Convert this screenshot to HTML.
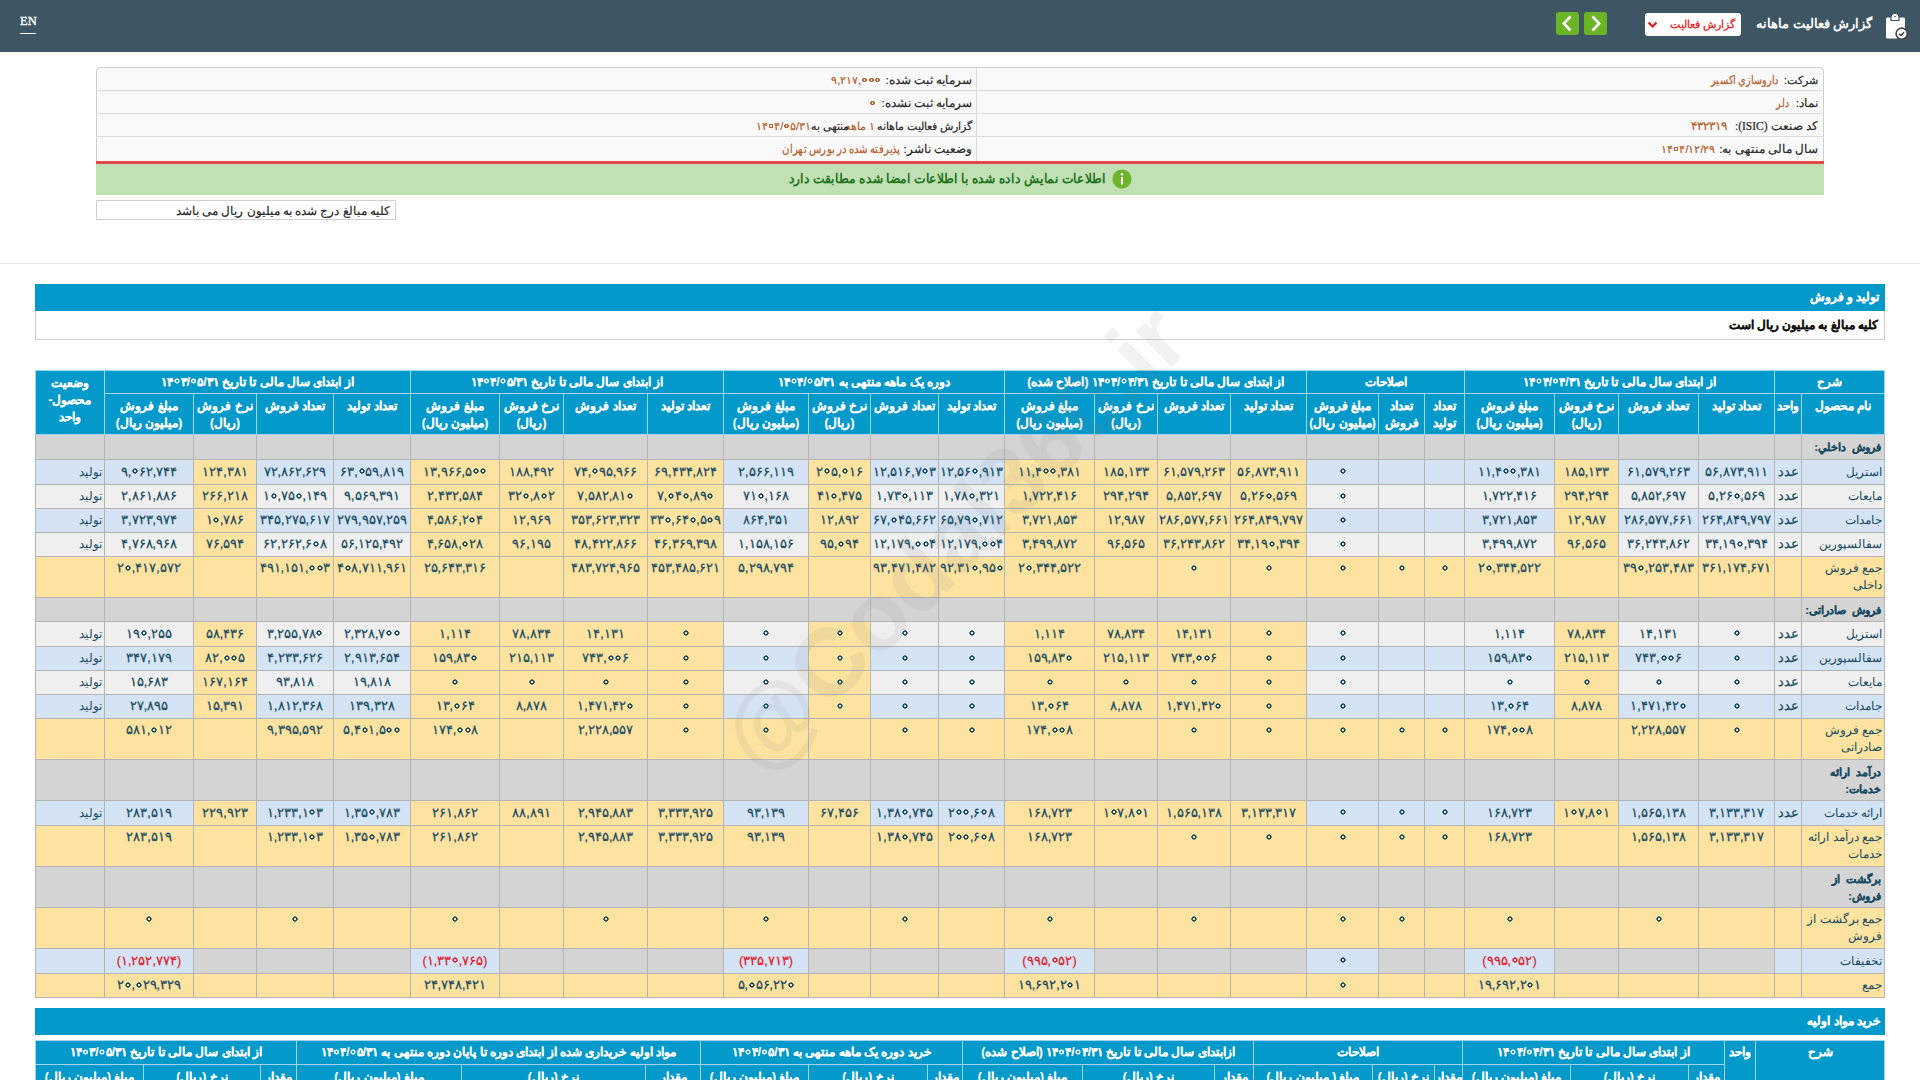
<!DOCTYPE html><html lang="fa" dir="rtl"><head><meta charset="utf-8"><title>Codal</title><style>
*{box-sizing:border-box;margin:0;padding:0}
html,body{width:1920px;height:1080px;overflow:hidden;background:#fff}
body{position:relative;font-family:'Liberation Sans',sans-serif;direction:rtl}
.a{position:absolute;white-space:nowrap}
#t1,#t2{position:absolute;left:0;top:0;width:1920px;height:1080px}
#t1grid{position:absolute;left:35px;top:370px;width:1850px;height:628px;background:#b4b4b4}
#t1hgrid{position:absolute;left:35px;top:370px;width:1850px;height:65px;background:#9fd4ec}
#t2grid{position:absolute;left:35px;top:1040px;width:1850px;height:60px;background:#9fd4ec}
.c,.l,.h,.sl{position:absolute;overflow:hidden;color:#184b62;font-size:12px;line-height:17px;text-align:center;white-space:nowrap;display:flex;align-items:center;justify-content:center}
.l{justify-content:flex-start;padding-right:2px;text-align:right}
.ct{align-items:flex-start;padding-top:3px}
.h{color:#fff;font-weight:bold;font-size:12px;-webkit-text-stroke:0.15px #fff}
.ht{align-items:flex-start;padding-top:4px}
.sl{justify-content:flex-start;padding-right:3px;font-weight:bold;align-items:flex-start;padding-top:3px;text-align:right;font-size:11.25px;padding-top:4px;word-spacing:3px;-webkit-text-stroke:0.2px currentColor}
.red{color:#e0202a}
bdo{unicode-bidi:isolate-override}
.hr{align-items:flex-start;padding-top:3px}
i{display:inline-block;width:0.48em;height:0.48em;background:radial-gradient(circle,transparent 0.07em,currentColor 0.105em,currentColor 0.19em,transparent 0.23em);margin:0 0.06em;vertical-align:0.12em}
.c{-webkit-text-stroke:0.25px currentColor;font-size:12.5px}
.it{color:#2a2a2a;-webkit-text-stroke:0.2px currentColor}
.iv{color:#b5602b;-webkit-text-stroke:0.2px currentColor}
</style></head><body>
<div class="a" style="left:0;top:0;width:1920px;height:52px;background:#3e5563"></div>
<div id="men" class="a" style="left:20px;top:13px;font-family:'Liberation Serif',serif;font-size:12.5px;color:#fff;direction:ltr;line-height:17px;-webkit-text-stroke:0.3px #fff">EN</div>
<div class="a" style="left:20px;top:33px;width:16px;height:1px;background:#fff"></div>
<svg class="a" style="left:1880px;top:10px" width="34" height="34" viewBox="0 0 34 34">
<rect x="6" y="7.5" width="19" height="21" rx="1.5" fill="#fff"/>
<path d="M11 10.5 v-3 a4 4 0 0 1 8 0 v3 z" fill="#fff" stroke="#3e5563" stroke-width="1.2"/>
<circle cx="15" cy="6.5" r="0.8" fill="#3e5563"/>
<circle cx="21.7" cy="23.7" r="5.6" fill="#fff" stroke="#444" stroke-width="1.6"/>
<path d="M19.2 23.9 l1.7 1.6 l3.2 -3.2" fill="none" stroke="#444" stroke-width="1.6"/>
</svg>
<div id="mtitle" class="a " style="right:47.5px;top:14px;font-size:13.25px;line-height:20px;font-weight:bold;color:#fff">گزارش فعالیت ماهانه</div>
<div class="a" style="left:1645px;top:13px;width:96px;height:23px;background:#fff;border-radius:3px"></div>
<div id="mdrop" class="a " style="right:185px;top:15px;font-size:11.25px;line-height:18px;color:#e01c1c;-webkit-text-stroke:0.25px currentColor">گزارش فعالیت</div>
<svg class="a" style="left:1647px;top:20px" width="11" height="9" viewBox="0 0 11 9"><path d="M1.5 2.5 L5.5 6.5 L9.5 2.5" fill="none" stroke="#e01c1c" stroke-width="2.2"/></svg>
<div class="a" style="left:1556px;top:12px;width:23px;height:23px;background:#6bb424;border-radius:3px"></div>
<div class="a" style="left:1584px;top:12px;width:23px;height:23px;background:#6bb424;border-radius:3px"></div>
<svg class="a" style="left:1556px;top:12px" width="23" height="23" viewBox="0 0 23 23"><path d="M14.5 4.5 L7.8 11.5 L14.5 18.5" fill="none" stroke="#fff" stroke-width="2.6"/></svg>
<svg class="a" style="left:1584px;top:12px" width="23" height="23" viewBox="0 0 23 23"><path d="M8.5 4.5 L15.2 11.5 L8.5 18.5" fill="none" stroke="#fff" stroke-width="2.6"/></svg>
<div class="a" style="left:96px;top:67px;width:1728px;height:96px;background:#f9f9f9;border:1px solid #cfcfcf;border-radius:4px 4px 0 0"></div>
<div class="a" style="left:97px;top:90px;width:1726px;height:1px;background:#dcdcdc"></div>
<div class="a" style="left:97px;top:113px;width:1726px;height:1px;background:#dcdcdc"></div>
<div class="a" style="left:97px;top:136px;width:1726px;height:1px;background:#dcdcdc"></div>
<div class="a" style="left:976px;top:68px;width:1px;height:93px;background:#dcdcdc"></div>
<div id="mr0l" class="a it" style="right:102px;top:68px;font-size:10.5px;line-height:24px;">شرکت:</div>
<div id="mr0v" class="a iv" style="right:142px;top:68px;font-size:11.5px;line-height:24px;transform:scaleX(0.811);transform-origin:100% 50%">داروسازي اکسیر</div>
<div id="mr1l" class="a it" style="right:102px;top:91px;font-size:11.5px;line-height:24px;">نماد:</div>
<div id="mr1v" class="a iv" style="right:131px;top:91px;font-size:11.5px;line-height:24px;transform:scaleX(0.794);transform-origin:100% 50%">دلر</div>
<div id="mr2l" class="a it" style="right:102px;top:114px;font-size:11.5px;line-height:24px;">کد صنعت <span style="font-family:'Liberation Serif',serif">(ISIC)</span>:</div>
<div id="mr2v" class="a iv" style="right:193.5px;top:114px;font-size:12px;line-height:24px;">۴۳۲۳۱۹</div>
<div id="mr3l" class="a it" style="right:102px;top:137px;font-size:11.5px;line-height:24px;">سال مالی منتهی به:</div>
<div id="mr3v" class="a iv" style="right:204.5px;top:137px;font-size:11px;line-height:24px;"><bdo dir="ltr">۱۴<i></i>۴/۱۲/۲۹</bdo></div>
<div id="ml0l" class="a it" style="right:948px;top:68px;font-size:11.5px;line-height:24px;">سرمایه ثبت شده:</div>
<div id="ml0v" class="a iv" style="right:1039px;top:68px;font-size:11px;line-height:24px;"><bdo dir="ltr">۹,۲۱۷,<i></i><i></i><i></i></bdo></div>
<div id="ml1l" class="a it" style="right:948px;top:91px;font-size:11.5px;line-height:24px;">سرمایه ثبت نشده:</div>
<div id="ml1v" class="a iv" style="right:1044px;top:91px;font-size:11px;line-height:24px;"><bdo dir="ltr"><i></i></bdo></div>
<div id="ml2l" class="a it" style="right:948px;top:114px;font-size:11px;line-height:24px;">گزارش فعالیت ماهانه</div>
<div id="ml2v" class="a iv" style="right:1045px;top:114px;font-size:11px;line-height:24px;">۱ ماهه</div>
<div id="ml2m" class="a it" style="right:1070.6px;top:114px;font-size:11px;line-height:24px;">منتهی به</div>
<div id="ml2w" class="a iv" style="right:1109px;top:114px;font-size:11px;line-height:24px;"><bdo dir="ltr">۱۴<i></i>۴/<i></i>۵/۳۱</bdo></div>
<div id="ml3l" class="a it" style="right:948px;top:137px;font-size:11.5px;line-height:24px;">وضعیت ناشر:</div>
<div id="ml3v" class="a iv" style="right:1020px;top:137px;font-size:11.5px;line-height:24px;transform:scaleX(0.846);transform-origin:100% 50%">پذیرفته شده در بورس تهران</div>
<div class="a" style="left:96px;top:161px;width:1728px;height:3px;background:#e04a4a"></div>
<div class="a" style="left:96px;top:164px;width:1728px;height:31px;background:#c1e0b4"></div>
<div id="mgreen" class="a " style="right:814px;top:169px;font-size:13px;line-height:20px;font-weight:bold;color:#22741f;transform:scaleX(0.942);transform-origin:100% 50%">اطلاعات نمایش داده شده با اطلاعات امضا شده مطابقت دارد</div>
<svg class="a" style="left:1112px;top:169px" width="20" height="20" viewBox="0 0 20 20"><circle cx="10" cy="10" r="9.6" fill="#6fb52a"/><rect x="9" y="8" width="2" height="7.5" fill="#fff"/><circle cx="10" cy="5.3" r="1.2" fill="#fff"/></svg>
<div class="a" style="left:96px;top:200px;width:300px;height:20px;border:1px solid #cfcfcf;background:#fff"></div>
<div id="mnote" class="a it" style="right:1530px;top:202px;font-size:11.75px;line-height:18px;">کلیه مبالغ درج شده به میلیون ریال می باشد</div>
<div class="a" style="left:0;top:263px;width:1920px;height:1px;background:#e6e6e6"></div>
<div class="a" style="left:35px;top:284px;width:1850px;height:27px;background:#0399cb"></div>
<div id="msec1" class="a " style="right:41px;top:288px;font-size:11.5px;line-height:18px;font-weight:bold;color:#fff;-webkit-text-stroke:0.25px #fff">تولید و فروش</div>
<div class="a" style="left:35px;top:311px;width:1850px;height:29px;border:1px solid #cfcfcf;border-top:none;background:#fff"></div>
<div id="msec1n" class="a " style="right:42px;top:316px;font-size:11.75px;line-height:18px;font-weight:bold;color:#111;-webkit-text-stroke:0.2px #111">کلیه مبالغ به میلیون ریال است</div>
<div id="t1grid"></div><div id="t1hgrid"></div>
<div id="t1"><div class="h" style="left:1775px;top:371px;width:109px;height:22px;background:#0399cb">شرح</div><div class="h" style="left:1465px;top:371px;width:309px;height:22px;background:#0399cb"><span>از ابتدای سال مالی تا تاریخ <bdo dir="ltr">۱۴<i></i>۴/<i></i>۴/۳۱</bdo></span></div><div class="h" style="left:1307px;top:371px;width:157px;height:22px;background:#0399cb">اصلاحات</div><div class="h" style="left:1005px;top:371px;width:301px;height:22px;background:#0399cb"><span>از ابتدای سال مالی تا تاریخ <bdo dir="ltr">۱۴<i></i>۴/<i></i>۴/۳۱</bdo> (اصلاح شده)</span></div><div class="h" style="left:724px;top:371px;width:280px;height:22px;background:#0399cb"><span>دوره یک ماهه منتهی به <bdo dir="ltr">۱۴<i></i>۴/<i></i>۵/۳۱</bdo></span></div><div class="h" style="left:411px;top:371px;width:312px;height:22px;background:#0399cb"><span>از ابتدای سال مالی تا تاریخ <bdo dir="ltr">۱۴<i></i>۴/<i></i>۵/۳۱</bdo></span></div><div class="h" style="left:105px;top:371px;width:305px;height:22px;background:#0399cb"><span>از ابتدای سال مالی تا تاریخ <bdo dir="ltr">۱۴<i></i>۳/<i></i>۵/۳۱</bdo></span></div><div class="h ht" style="left:36px;top:371px;width:68px;height:63px;background:#0399cb">وضعیت<br>محصول-<br>واحد</div><div class="h ht" style="left:1802px;top:394px;width:82px;height:40px;background:#0399cb">نام محصول</div><div class="h ht" style="left:1775px;top:394px;width:26px;height:40px;background:#0399cb">واحد</div><div class="h ht" style="left:1699px;top:394px;width:75px;height:40px;background:#0399cb">تعداد تولید</div><div class="h ht" style="left:1619px;top:394px;width:79px;height:40px;background:#0399cb">تعداد فروش</div><div class="h ht" style="left:1555px;top:394px;width:63px;height:40px;background:#0399cb">نرخ فروش<br>(ریال)</div><div class="h ht" style="left:1465px;top:394px;width:89px;height:40px;background:#0399cb">مبلغ فروش<br>(میلیون ریال)</div><div class="h ht" style="left:1425px;top:394px;width:39px;height:40px;background:#0399cb">تعداد<br>تولید</div><div class="h ht" style="left:1379px;top:394px;width:45px;height:40px;background:#0399cb">تعداد<br>فروش</div><div class="h ht" style="left:1307px;top:394px;width:71px;height:40px;background:#0399cb">مبلغ فروش<br>(میلیون ریال)</div><div class="h ht" style="left:1231px;top:394px;width:75px;height:40px;background:#0399cb">تعداد تولید</div><div class="h ht" style="left:1158px;top:394px;width:72px;height:40px;background:#0399cb">تعداد فروش</div><div class="h ht" style="left:1095px;top:394px;width:62px;height:40px;background:#0399cb">نرخ فروش<br>(ریال)</div><div class="h ht" style="left:1005px;top:394px;width:89px;height:40px;background:#0399cb">مبلغ فروش<br>(میلیون ریال)</div><div class="h ht" style="left:939px;top:394px;width:65px;height:40px;background:#0399cb">تعداد تولید</div><div class="h ht" style="left:871px;top:394px;width:67px;height:40px;background:#0399cb">تعداد فروش</div><div class="h ht" style="left:809px;top:394px;width:61px;height:40px;background:#0399cb">نرخ فروش<br>(ریال)</div><div class="h ht" style="left:724px;top:394px;width:84px;height:40px;background:#0399cb">مبلغ فروش<br>(میلیون ریال)</div><div class="h ht" style="left:648px;top:394px;width:75px;height:40px;background:#0399cb">تعداد تولید</div><div class="h ht" style="left:564px;top:394px;width:83px;height:40px;background:#0399cb">تعداد فروش</div><div class="h ht" style="left:500px;top:394px;width:63px;height:40px;background:#0399cb">نرخ فروش<br>(ریال)</div><div class="h ht" style="left:411px;top:394px;width:88px;height:40px;background:#0399cb">مبلغ فروش<br>(میلیون ریال)</div><div class="h ht" style="left:334px;top:394px;width:76px;height:40px;background:#0399cb">تعداد تولید</div><div class="h ht" style="left:257px;top:394px;width:76px;height:40px;background:#0399cb">تعداد فروش</div><div class="h ht" style="left:194px;top:394px;width:62px;height:40px;background:#0399cb">نرخ فروش<br>(ریال)</div><div class="h ht" style="left:105px;top:394px;width:88px;height:40px;background:#0399cb">مبلغ فروش<br>(میلیون ریال)</div><div class="sl" style="left:1802px;top:435px;width:82px;height:24px;background:#d4d4d4">فروش داخلي:</div><div class="c" style="left:1775px;top:435px;width:26px;height:24px;background:#d4d4d4"></div><div class="c" style="left:1699px;top:435px;width:75px;height:24px;background:#d4d4d4"></div><div class="c" style="left:1619px;top:435px;width:79px;height:24px;background:#d4d4d4"></div><div class="c" style="left:1555px;top:435px;width:63px;height:24px;background:#d4d4d4"></div><div class="c" style="left:1465px;top:435px;width:89px;height:24px;background:#d4d4d4"></div><div class="c" style="left:1425px;top:435px;width:39px;height:24px;background:#d4d4d4"></div><div class="c" style="left:1379px;top:435px;width:45px;height:24px;background:#d4d4d4"></div><div class="c" style="left:1307px;top:435px;width:71px;height:24px;background:#d4d4d4"></div><div class="c" style="left:1231px;top:435px;width:75px;height:24px;background:#d4d4d4"></div><div class="c" style="left:1158px;top:435px;width:72px;height:24px;background:#d4d4d4"></div><div class="c" style="left:1095px;top:435px;width:62px;height:24px;background:#d4d4d4"></div><div class="c" style="left:1005px;top:435px;width:89px;height:24px;background:#d4d4d4"></div><div class="c" style="left:939px;top:435px;width:65px;height:24px;background:#d4d4d4"></div><div class="c" style="left:871px;top:435px;width:67px;height:24px;background:#d4d4d4"></div><div class="c" style="left:809px;top:435px;width:61px;height:24px;background:#d4d4d4"></div><div class="c" style="left:724px;top:435px;width:84px;height:24px;background:#d4d4d4"></div><div class="c" style="left:648px;top:435px;width:75px;height:24px;background:#d4d4d4"></div><div class="c" style="left:564px;top:435px;width:83px;height:24px;background:#d4d4d4"></div><div class="c" style="left:500px;top:435px;width:63px;height:24px;background:#d4d4d4"></div><div class="c" style="left:411px;top:435px;width:88px;height:24px;background:#d4d4d4"></div><div class="c" style="left:334px;top:435px;width:76px;height:24px;background:#d4d4d4"></div><div class="c" style="left:257px;top:435px;width:76px;height:24px;background:#d4d4d4"></div><div class="c" style="left:194px;top:435px;width:62px;height:24px;background:#d4d4d4"></div><div class="c" style="left:105px;top:435px;width:88px;height:24px;background:#d4d4d4"></div><div class="c" style="left:36px;top:435px;width:68px;height:24px;background:#d4d4d4"></div><div class="l" style="left:1802px;top:460px;width:82px;height:24px;background:#d5e4f4">استریل</div><div class="c" style="left:1775px;top:460px;width:26px;height:24px;background:#d5e4f4">عدد</div><div class="c" style="left:1699px;top:460px;width:75px;height:24px;background:#d5e4f4"><bdo dir="ltr">۵۶,۸۷۳,۹۱۱</bdo></div><div class="c" style="left:1619px;top:460px;width:79px;height:24px;background:#d5e4f4"><bdo dir="ltr">۶۱,۵۷۹,۲۶۳</bdo></div><div class="c" style="left:1555px;top:460px;width:63px;height:24px;background:#fde2a0"><bdo dir="ltr">۱۸۵,۱۳۳</bdo></div><div class="c" style="left:1465px;top:460px;width:89px;height:24px;background:#d5e4f4"><bdo dir="ltr">۱۱,۴<i></i><i></i>,۳۸۱</bdo></div><div class="c" style="left:1425px;top:460px;width:39px;height:24px;background:#d5e4f4"></div><div class="c" style="left:1379px;top:460px;width:45px;height:24px;background:#d5e4f4"></div><div class="c" style="left:1307px;top:460px;width:71px;height:24px;background:#d5e4f4"><bdo dir="ltr"><i></i></bdo></div><div class="c" style="left:1231px;top:460px;width:75px;height:24px;background:#fde2a0"><bdo dir="ltr">۵۶,۸۷۳,۹۱۱</bdo></div><div class="c" style="left:1158px;top:460px;width:72px;height:24px;background:#fde2a0"><bdo dir="ltr">۶۱,۵۷۹,۲۶۳</bdo></div><div class="c" style="left:1095px;top:460px;width:62px;height:24px;background:#fde2a0"><bdo dir="ltr">۱۸۵,۱۳۳</bdo></div><div class="c" style="left:1005px;top:460px;width:89px;height:24px;background:#fde2a0"><bdo dir="ltr">۱۱,۴<i></i><i></i>,۳۸۱</bdo></div><div class="c" style="left:939px;top:460px;width:65px;height:24px;background:#d5e4f4"><bdo dir="ltr">۱۲,۵۶<i></i>,۹۱۳</bdo></div><div class="c" style="left:871px;top:460px;width:67px;height:24px;background:#d5e4f4"><bdo dir="ltr">۱۲,۵۱۶,۷<i></i>۳</bdo></div><div class="c" style="left:809px;top:460px;width:61px;height:24px;background:#fde2a0"><bdo dir="ltr">۲<i></i>۵,<i></i>۱۶</bdo></div><div class="c" style="left:724px;top:460px;width:84px;height:24px;background:#d5e4f4"><bdo dir="ltr">۲,۵۶۶,۱۱۹</bdo></div><div class="c" style="left:648px;top:460px;width:75px;height:24px;background:#fde2a0"><bdo dir="ltr">۶۹,۴۳۴,۸۲۴</bdo></div><div class="c" style="left:564px;top:460px;width:83px;height:24px;background:#fde2a0"><bdo dir="ltr">۷۴,<i></i>۹۵,۹۶۶</bdo></div><div class="c" style="left:500px;top:460px;width:63px;height:24px;background:#fde2a0"><bdo dir="ltr">۱۸۸,۴۹۲</bdo></div><div class="c" style="left:411px;top:460px;width:88px;height:24px;background:#fde2a0"><bdo dir="ltr">۱۳,۹۶۶,۵<i></i><i></i></bdo></div><div class="c" style="left:334px;top:460px;width:76px;height:24px;background:#d5e4f4"><bdo dir="ltr">۶۳,<i></i>۵۹,۸۱۹</bdo></div><div class="c" style="left:257px;top:460px;width:76px;height:24px;background:#d5e4f4"><bdo dir="ltr">۷۲,۸۶۲,۶۲۹</bdo></div><div class="c" style="left:194px;top:460px;width:62px;height:24px;background:#fde2a0"><bdo dir="ltr">۱۲۴,۳۸۱</bdo></div><div class="c" style="left:105px;top:460px;width:88px;height:24px;background:#d5e4f4"><bdo dir="ltr">۹,<i></i>۶۲,۷۴۴</bdo></div><div class="l" style="left:36px;top:460px;width:68px;height:24px;background:#d5e4f4">تولید</div><div class="l" style="left:1802px;top:485px;width:82px;height:23px;background:#efefef">مایعات</div><div class="c" style="left:1775px;top:485px;width:26px;height:23px;background:#efefef">عدد</div><div class="c" style="left:1699px;top:485px;width:75px;height:23px;background:#efefef"><bdo dir="ltr">۵,۲۶<i></i>,۵۶۹</bdo></div><div class="c" style="left:1619px;top:485px;width:79px;height:23px;background:#efefef"><bdo dir="ltr">۵,۸۵۲,۶۹۷</bdo></div><div class="c" style="left:1555px;top:485px;width:63px;height:23px;background:#fde2a0"><bdo dir="ltr">۲۹۴,۲۹۴</bdo></div><div class="c" style="left:1465px;top:485px;width:89px;height:23px;background:#efefef"><bdo dir="ltr">۱,۷۲۲,۴۱۶</bdo></div><div class="c" style="left:1425px;top:485px;width:39px;height:23px;background:#efefef"></div><div class="c" style="left:1379px;top:485px;width:45px;height:23px;background:#efefef"></div><div class="c" style="left:1307px;top:485px;width:71px;height:23px;background:#efefef"><bdo dir="ltr"><i></i></bdo></div><div class="c" style="left:1231px;top:485px;width:75px;height:23px;background:#fde2a0"><bdo dir="ltr">۵,۲۶<i></i>,۵۶۹</bdo></div><div class="c" style="left:1158px;top:485px;width:72px;height:23px;background:#fde2a0"><bdo dir="ltr">۵,۸۵۲,۶۹۷</bdo></div><div class="c" style="left:1095px;top:485px;width:62px;height:23px;background:#fde2a0"><bdo dir="ltr">۲۹۴,۲۹۴</bdo></div><div class="c" style="left:1005px;top:485px;width:89px;height:23px;background:#fde2a0"><bdo dir="ltr">۱,۷۲۲,۴۱۶</bdo></div><div class="c" style="left:939px;top:485px;width:65px;height:23px;background:#efefef"><bdo dir="ltr">۱,۷۸<i></i>,۳۲۱</bdo></div><div class="c" style="left:871px;top:485px;width:67px;height:23px;background:#efefef"><bdo dir="ltr">۱,۷۳<i></i>,۱۱۳</bdo></div><div class="c" style="left:809px;top:485px;width:61px;height:23px;background:#fde2a0"><bdo dir="ltr">۴۱<i></i>,۴۷۵</bdo></div><div class="c" style="left:724px;top:485px;width:84px;height:23px;background:#efefef"><bdo dir="ltr">۷۱<i></i>,۱۶۸</bdo></div><div class="c" style="left:648px;top:485px;width:75px;height:23px;background:#fde2a0"><bdo dir="ltr">۷,<i></i>۴<i></i>,۸۹<i></i></bdo></div><div class="c" style="left:564px;top:485px;width:83px;height:23px;background:#fde2a0"><bdo dir="ltr">۷,۵۸۲,۸۱<i></i></bdo></div><div class="c" style="left:500px;top:485px;width:63px;height:23px;background:#fde2a0"><bdo dir="ltr">۳۲<i></i>,۸<i></i>۲</bdo></div><div class="c" style="left:411px;top:485px;width:88px;height:23px;background:#fde2a0"><bdo dir="ltr">۲,۴۳۲,۵۸۴</bdo></div><div class="c" style="left:334px;top:485px;width:76px;height:23px;background:#efefef"><bdo dir="ltr">۹,۵۶۹,۳۹۱</bdo></div><div class="c" style="left:257px;top:485px;width:76px;height:23px;background:#efefef"><bdo dir="ltr">۱<i></i>,۷۵<i></i>,۱۴۹</bdo></div><div class="c" style="left:194px;top:485px;width:62px;height:23px;background:#fde2a0"><bdo dir="ltr">۲۶۶,۲۱۸</bdo></div><div class="c" style="left:105px;top:485px;width:88px;height:23px;background:#efefef"><bdo dir="ltr">۲,۸۶۱,۸۸۶</bdo></div><div class="l" style="left:36px;top:485px;width:68px;height:23px;background:#efefef">تولید</div><div class="l" style="left:1802px;top:509px;width:82px;height:23px;background:#d5e4f4">جامدات</div><div class="c" style="left:1775px;top:509px;width:26px;height:23px;background:#d5e4f4">عدد</div><div class="c" style="left:1699px;top:509px;width:75px;height:23px;background:#d5e4f4"><bdo dir="ltr">۲۶۴,۸۴۹,۷۹۷</bdo></div><div class="c" style="left:1619px;top:509px;width:79px;height:23px;background:#d5e4f4"><bdo dir="ltr">۲۸۶,۵۷۷,۶۶۱</bdo></div><div class="c" style="left:1555px;top:509px;width:63px;height:23px;background:#fde2a0"><bdo dir="ltr">۱۲,۹۸۷</bdo></div><div class="c" style="left:1465px;top:509px;width:89px;height:23px;background:#d5e4f4"><bdo dir="ltr">۳,۷۲۱,۸۵۳</bdo></div><div class="c" style="left:1425px;top:509px;width:39px;height:23px;background:#d5e4f4"></div><div class="c" style="left:1379px;top:509px;width:45px;height:23px;background:#d5e4f4"></div><div class="c" style="left:1307px;top:509px;width:71px;height:23px;background:#d5e4f4"><bdo dir="ltr"><i></i></bdo></div><div class="c" style="left:1231px;top:509px;width:75px;height:23px;background:#fde2a0"><bdo dir="ltr">۲۶۴,۸۴۹,۷۹۷</bdo></div><div class="c" style="left:1158px;top:509px;width:72px;height:23px;background:#fde2a0"><bdo dir="ltr">۲۸۶,۵۷۷,۶۶۱</bdo></div><div class="c" style="left:1095px;top:509px;width:62px;height:23px;background:#fde2a0"><bdo dir="ltr">۱۲,۹۸۷</bdo></div><div class="c" style="left:1005px;top:509px;width:89px;height:23px;background:#fde2a0"><bdo dir="ltr">۳,۷۲۱,۸۵۳</bdo></div><div class="c" style="left:939px;top:509px;width:65px;height:23px;background:#d5e4f4"><bdo dir="ltr">۶۵,۷۹<i></i>,۷۱۲</bdo></div><div class="c" style="left:871px;top:509px;width:67px;height:23px;background:#d5e4f4"><bdo dir="ltr">۶۷,<i></i>۴۵,۶۶۲</bdo></div><div class="c" style="left:809px;top:509px;width:61px;height:23px;background:#fde2a0"><bdo dir="ltr">۱۲,۸۹۲</bdo></div><div class="c" style="left:724px;top:509px;width:84px;height:23px;background:#d5e4f4"><bdo dir="ltr">۸۶۴,۳۵۱</bdo></div><div class="c" style="left:648px;top:509px;width:75px;height:23px;background:#fde2a0"><bdo dir="ltr">۳۳<i></i>,۶۴<i></i>,۵<i></i>۹</bdo></div><div class="c" style="left:564px;top:509px;width:83px;height:23px;background:#fde2a0"><bdo dir="ltr">۳۵۳,۶۲۳,۳۲۳</bdo></div><div class="c" style="left:500px;top:509px;width:63px;height:23px;background:#fde2a0"><bdo dir="ltr">۱۲,۹۶۹</bdo></div><div class="c" style="left:411px;top:509px;width:88px;height:23px;background:#fde2a0"><bdo dir="ltr">۴,۵۸۶,۲<i></i>۴</bdo></div><div class="c" style="left:334px;top:509px;width:76px;height:23px;background:#d5e4f4"><bdo dir="ltr">۲۷۹,۹۵۷,۲۵۹</bdo></div><div class="c" style="left:257px;top:509px;width:76px;height:23px;background:#d5e4f4"><bdo dir="ltr">۳۴۵,۲۷۵,۶۱۷</bdo></div><div class="c" style="left:194px;top:509px;width:62px;height:23px;background:#fde2a0"><bdo dir="ltr">۱<i></i>,۷۸۶</bdo></div><div class="c" style="left:105px;top:509px;width:88px;height:23px;background:#d5e4f4"><bdo dir="ltr">۳,۷۲۳,۹۷۴</bdo></div><div class="l" style="left:36px;top:509px;width:68px;height:23px;background:#d5e4f4">تولید</div><div class="l" style="left:1802px;top:533px;width:82px;height:23px;background:#efefef">سفالسپورین</div><div class="c" style="left:1775px;top:533px;width:26px;height:23px;background:#efefef">عدد</div><div class="c" style="left:1699px;top:533px;width:75px;height:23px;background:#efefef"><bdo dir="ltr">۳۴,۱۹<i></i>,۳۹۴</bdo></div><div class="c" style="left:1619px;top:533px;width:79px;height:23px;background:#efefef"><bdo dir="ltr">۳۶,۲۴۳,۸۶۲</bdo></div><div class="c" style="left:1555px;top:533px;width:63px;height:23px;background:#fde2a0"><bdo dir="ltr">۹۶,۵۶۵</bdo></div><div class="c" style="left:1465px;top:533px;width:89px;height:23px;background:#efefef"><bdo dir="ltr">۳,۴۹۹,۸۷۲</bdo></div><div class="c" style="left:1425px;top:533px;width:39px;height:23px;background:#efefef"></div><div class="c" style="left:1379px;top:533px;width:45px;height:23px;background:#efefef"></div><div class="c" style="left:1307px;top:533px;width:71px;height:23px;background:#efefef"><bdo dir="ltr"><i></i></bdo></div><div class="c" style="left:1231px;top:533px;width:75px;height:23px;background:#fde2a0"><bdo dir="ltr">۳۴,۱۹<i></i>,۳۹۴</bdo></div><div class="c" style="left:1158px;top:533px;width:72px;height:23px;background:#fde2a0"><bdo dir="ltr">۳۶,۲۴۳,۸۶۲</bdo></div><div class="c" style="left:1095px;top:533px;width:62px;height:23px;background:#fde2a0"><bdo dir="ltr">۹۶,۵۶۵</bdo></div><div class="c" style="left:1005px;top:533px;width:89px;height:23px;background:#fde2a0"><bdo dir="ltr">۳,۴۹۹,۸۷۲</bdo></div><div class="c" style="left:939px;top:533px;width:65px;height:23px;background:#efefef"><bdo dir="ltr">۱۲,۱۷۹,<i></i><i></i>۴</bdo></div><div class="c" style="left:871px;top:533px;width:67px;height:23px;background:#efefef"><bdo dir="ltr">۱۲,۱۷۹,<i></i><i></i>۴</bdo></div><div class="c" style="left:809px;top:533px;width:61px;height:23px;background:#fde2a0"><bdo dir="ltr">۹۵,<i></i>۹۴</bdo></div><div class="c" style="left:724px;top:533px;width:84px;height:23px;background:#efefef"><bdo dir="ltr">۱,۱۵۸,۱۵۶</bdo></div><div class="c" style="left:648px;top:533px;width:75px;height:23px;background:#fde2a0"><bdo dir="ltr">۴۶,۳۶۹,۳۹۸</bdo></div><div class="c" style="left:564px;top:533px;width:83px;height:23px;background:#fde2a0"><bdo dir="ltr">۴۸,۴۲۲,۸۶۶</bdo></div><div class="c" style="left:500px;top:533px;width:63px;height:23px;background:#fde2a0"><bdo dir="ltr">۹۶,۱۹۵</bdo></div><div class="c" style="left:411px;top:533px;width:88px;height:23px;background:#fde2a0"><bdo dir="ltr">۴,۶۵۸,<i></i>۲۸</bdo></div><div class="c" style="left:334px;top:533px;width:76px;height:23px;background:#efefef"><bdo dir="ltr">۵۶,۱۲۵,۴۹۲</bdo></div><div class="c" style="left:257px;top:533px;width:76px;height:23px;background:#efefef"><bdo dir="ltr">۶۲,۲۶۲,۶<i></i>۸</bdo></div><div class="c" style="left:194px;top:533px;width:62px;height:23px;background:#fde2a0"><bdo dir="ltr">۷۶,۵۹۴</bdo></div><div class="c" style="left:105px;top:533px;width:88px;height:23px;background:#efefef"><bdo dir="ltr">۴,۷۶۸,۹۶۸</bdo></div><div class="l" style="left:36px;top:533px;width:68px;height:23px;background:#efefef">تولید</div><div class="l" style="left:1802px;top:557px;width:82px;height:40px;background:#fde2a0">جمع فروش<br>داخلی</div><div class="c ct" style="left:1775px;top:557px;width:26px;height:40px;background:#fde2a0"></div><div class="c ct" style="left:1699px;top:557px;width:75px;height:40px;background:#fde2a0"><bdo dir="ltr">۳۶۱,۱۷۴,۶۷۱</bdo></div><div class="c ct" style="left:1619px;top:557px;width:79px;height:40px;background:#fde2a0"><bdo dir="ltr">۳۹<i></i>,۲۵۳,۴۸۳</bdo></div><div class="c ct" style="left:1555px;top:557px;width:63px;height:40px;background:#fde2a0"></div><div class="c ct" style="left:1465px;top:557px;width:89px;height:40px;background:#fde2a0"><bdo dir="ltr">۲<i></i>,۳۴۴,۵۲۲</bdo></div><div class="c ct" style="left:1425px;top:557px;width:39px;height:40px;background:#fde2a0"><bdo dir="ltr"><i></i></bdo></div><div class="c ct" style="left:1379px;top:557px;width:45px;height:40px;background:#fde2a0"><bdo dir="ltr"><i></i></bdo></div><div class="c ct" style="left:1307px;top:557px;width:71px;height:40px;background:#fde2a0"><bdo dir="ltr"><i></i></bdo></div><div class="c ct" style="left:1231px;top:557px;width:75px;height:40px;background:#fde2a0"><bdo dir="ltr"><i></i></bdo></div><div class="c ct" style="left:1158px;top:557px;width:72px;height:40px;background:#fde2a0"><bdo dir="ltr"><i></i></bdo></div><div class="c ct" style="left:1095px;top:557px;width:62px;height:40px;background:#fde2a0"></div><div class="c ct" style="left:1005px;top:557px;width:89px;height:40px;background:#fde2a0"><bdo dir="ltr">۲<i></i>,۳۴۴,۵۲۲</bdo></div><div class="c ct" style="left:939px;top:557px;width:65px;height:40px;background:#fde2a0"><bdo dir="ltr">۹۲,۳۱<i></i>,۹۵<i></i></bdo></div><div class="c ct" style="left:871px;top:557px;width:67px;height:40px;background:#fde2a0"><bdo dir="ltr">۹۳,۴۷۱,۴۸۲</bdo></div><div class="c ct" style="left:809px;top:557px;width:61px;height:40px;background:#fde2a0"></div><div class="c ct" style="left:724px;top:557px;width:84px;height:40px;background:#fde2a0"><bdo dir="ltr">۵,۲۹۸,۷۹۴</bdo></div><div class="c ct" style="left:648px;top:557px;width:75px;height:40px;background:#fde2a0"><bdo dir="ltr">۴۵۳,۴۸۵,۶۲۱</bdo></div><div class="c ct" style="left:564px;top:557px;width:83px;height:40px;background:#fde2a0"><bdo dir="ltr">۴۸۳,۷۲۴,۹۶۵</bdo></div><div class="c ct" style="left:500px;top:557px;width:63px;height:40px;background:#fde2a0"></div><div class="c ct" style="left:411px;top:557px;width:88px;height:40px;background:#fde2a0"><bdo dir="ltr">۲۵,۶۴۳,۳۱۶</bdo></div><div class="c ct" style="left:334px;top:557px;width:76px;height:40px;background:#fde2a0"><bdo dir="ltr">۴<i></i>۸,۷۱۱,۹۶۱</bdo></div><div class="c ct" style="left:257px;top:557px;width:76px;height:40px;background:#fde2a0"><bdo dir="ltr">۴۹۱,۱۵۱,<i></i><i></i>۳</bdo></div><div class="c ct" style="left:194px;top:557px;width:62px;height:40px;background:#fde2a0"></div><div class="c ct" style="left:105px;top:557px;width:88px;height:40px;background:#fde2a0"><bdo dir="ltr">۲<i></i>,۴۱۷,۵۷۲</bdo></div><div class="l ct" style="left:36px;top:557px;width:68px;height:40px;background:#fde2a0"></div><div class="sl" style="left:1802px;top:598px;width:82px;height:23px;background:#d4d4d4">فروش صادراتی:</div><div class="c" style="left:1775px;top:598px;width:26px;height:23px;background:#d4d4d4"></div><div class="c" style="left:1699px;top:598px;width:75px;height:23px;background:#d4d4d4"></div><div class="c" style="left:1619px;top:598px;width:79px;height:23px;background:#d4d4d4"></div><div class="c" style="left:1555px;top:598px;width:63px;height:23px;background:#d4d4d4"></div><div class="c" style="left:1465px;top:598px;width:89px;height:23px;background:#d4d4d4"></div><div class="c" style="left:1425px;top:598px;width:39px;height:23px;background:#d4d4d4"></div><div class="c" style="left:1379px;top:598px;width:45px;height:23px;background:#d4d4d4"></div><div class="c" style="left:1307px;top:598px;width:71px;height:23px;background:#d4d4d4"></div><div class="c" style="left:1231px;top:598px;width:75px;height:23px;background:#d4d4d4"></div><div class="c" style="left:1158px;top:598px;width:72px;height:23px;background:#d4d4d4"></div><div class="c" style="left:1095px;top:598px;width:62px;height:23px;background:#d4d4d4"></div><div class="c" style="left:1005px;top:598px;width:89px;height:23px;background:#d4d4d4"></div><div class="c" style="left:939px;top:598px;width:65px;height:23px;background:#d4d4d4"></div><div class="c" style="left:871px;top:598px;width:67px;height:23px;background:#d4d4d4"></div><div class="c" style="left:809px;top:598px;width:61px;height:23px;background:#d4d4d4"></div><div class="c" style="left:724px;top:598px;width:84px;height:23px;background:#d4d4d4"></div><div class="c" style="left:648px;top:598px;width:75px;height:23px;background:#d4d4d4"></div><div class="c" style="left:564px;top:598px;width:83px;height:23px;background:#d4d4d4"></div><div class="c" style="left:500px;top:598px;width:63px;height:23px;background:#d4d4d4"></div><div class="c" style="left:411px;top:598px;width:88px;height:23px;background:#d4d4d4"></div><div class="c" style="left:334px;top:598px;width:76px;height:23px;background:#d4d4d4"></div><div class="c" style="left:257px;top:598px;width:76px;height:23px;background:#d4d4d4"></div><div class="c" style="left:194px;top:598px;width:62px;height:23px;background:#d4d4d4"></div><div class="c" style="left:105px;top:598px;width:88px;height:23px;background:#d4d4d4"></div><div class="c" style="left:36px;top:598px;width:68px;height:23px;background:#d4d4d4"></div><div class="l" style="left:1802px;top:622px;width:82px;height:24px;background:#efefef">استریل</div><div class="c" style="left:1775px;top:622px;width:26px;height:24px;background:#efefef">عدد</div><div class="c" style="left:1699px;top:622px;width:75px;height:24px;background:#efefef"><bdo dir="ltr"><i></i></bdo></div><div class="c" style="left:1619px;top:622px;width:79px;height:24px;background:#efefef"><bdo dir="ltr">۱۴,۱۳۱</bdo></div><div class="c" style="left:1555px;top:622px;width:63px;height:24px;background:#fde2a0"><bdo dir="ltr">۷۸,۸۳۴</bdo></div><div class="c" style="left:1465px;top:622px;width:89px;height:24px;background:#efefef"><bdo dir="ltr">۱,۱۱۴</bdo></div><div class="c" style="left:1425px;top:622px;width:39px;height:24px;background:#efefef"></div><div class="c" style="left:1379px;top:622px;width:45px;height:24px;background:#efefef"></div><div class="c" style="left:1307px;top:622px;width:71px;height:24px;background:#efefef"><bdo dir="ltr"><i></i></bdo></div><div class="c" style="left:1231px;top:622px;width:75px;height:24px;background:#fde2a0"><bdo dir="ltr"><i></i></bdo></div><div class="c" style="left:1158px;top:622px;width:72px;height:24px;background:#fde2a0"><bdo dir="ltr">۱۴,۱۳۱</bdo></div><div class="c" style="left:1095px;top:622px;width:62px;height:24px;background:#fde2a0"><bdo dir="ltr">۷۸,۸۳۴</bdo></div><div class="c" style="left:1005px;top:622px;width:89px;height:24px;background:#fde2a0"><bdo dir="ltr">۱,۱۱۴</bdo></div><div class="c" style="left:939px;top:622px;width:65px;height:24px;background:#efefef"><bdo dir="ltr"><i></i></bdo></div><div class="c" style="left:871px;top:622px;width:67px;height:24px;background:#efefef"><bdo dir="ltr"><i></i></bdo></div><div class="c" style="left:809px;top:622px;width:61px;height:24px;background:#fde2a0"><bdo dir="ltr"><i></i></bdo></div><div class="c" style="left:724px;top:622px;width:84px;height:24px;background:#efefef"><bdo dir="ltr"><i></i></bdo></div><div class="c" style="left:648px;top:622px;width:75px;height:24px;background:#fde2a0"><bdo dir="ltr"><i></i></bdo></div><div class="c" style="left:564px;top:622px;width:83px;height:24px;background:#fde2a0"><bdo dir="ltr">۱۴,۱۳۱</bdo></div><div class="c" style="left:500px;top:622px;width:63px;height:24px;background:#fde2a0"><bdo dir="ltr">۷۸,۸۳۴</bdo></div><div class="c" style="left:411px;top:622px;width:88px;height:24px;background:#fde2a0"><bdo dir="ltr">۱,۱۱۴</bdo></div><div class="c" style="left:334px;top:622px;width:76px;height:24px;background:#efefef"><bdo dir="ltr">۲,۳۲۸,۷<i></i><i></i></bdo></div><div class="c" style="left:257px;top:622px;width:76px;height:24px;background:#efefef"><bdo dir="ltr">۳,۲۵۵,۷۸<i></i></bdo></div><div class="c" style="left:194px;top:622px;width:62px;height:24px;background:#fde2a0"><bdo dir="ltr">۵۸,۴۳۶</bdo></div><div class="c" style="left:105px;top:622px;width:88px;height:24px;background:#efefef"><bdo dir="ltr">۱۹<i></i>,۲۵۵</bdo></div><div class="l" style="left:36px;top:622px;width:68px;height:24px;background:#efefef">تولید</div><div class="l" style="left:1802px;top:647px;width:82px;height:23px;background:#d5e4f4">سفالسپورین</div><div class="c" style="left:1775px;top:647px;width:26px;height:23px;background:#d5e4f4">عدد</div><div class="c" style="left:1699px;top:647px;width:75px;height:23px;background:#d5e4f4"><bdo dir="ltr"><i></i></bdo></div><div class="c" style="left:1619px;top:647px;width:79px;height:23px;background:#d5e4f4"><bdo dir="ltr">۷۴۳,<i></i><i></i>۶</bdo></div><div class="c" style="left:1555px;top:647px;width:63px;height:23px;background:#fde2a0"><bdo dir="ltr">۲۱۵,۱۱۳</bdo></div><div class="c" style="left:1465px;top:647px;width:89px;height:23px;background:#d5e4f4"><bdo dir="ltr">۱۵۹,۸۳<i></i></bdo></div><div class="c" style="left:1425px;top:647px;width:39px;height:23px;background:#d5e4f4"></div><div class="c" style="left:1379px;top:647px;width:45px;height:23px;background:#d5e4f4"></div><div class="c" style="left:1307px;top:647px;width:71px;height:23px;background:#d5e4f4"><bdo dir="ltr"><i></i></bdo></div><div class="c" style="left:1231px;top:647px;width:75px;height:23px;background:#fde2a0"><bdo dir="ltr"><i></i></bdo></div><div class="c" style="left:1158px;top:647px;width:72px;height:23px;background:#fde2a0"><bdo dir="ltr">۷۴۳,<i></i><i></i>۶</bdo></div><div class="c" style="left:1095px;top:647px;width:62px;height:23px;background:#fde2a0"><bdo dir="ltr">۲۱۵,۱۱۳</bdo></div><div class="c" style="left:1005px;top:647px;width:89px;height:23px;background:#fde2a0"><bdo dir="ltr">۱۵۹,۸۳<i></i></bdo></div><div class="c" style="left:939px;top:647px;width:65px;height:23px;background:#d5e4f4"><bdo dir="ltr"><i></i></bdo></div><div class="c" style="left:871px;top:647px;width:67px;height:23px;background:#d5e4f4"><bdo dir="ltr"><i></i></bdo></div><div class="c" style="left:809px;top:647px;width:61px;height:23px;background:#fde2a0"><bdo dir="ltr"><i></i></bdo></div><div class="c" style="left:724px;top:647px;width:84px;height:23px;background:#d5e4f4"><bdo dir="ltr"><i></i></bdo></div><div class="c" style="left:648px;top:647px;width:75px;height:23px;background:#fde2a0"><bdo dir="ltr"><i></i></bdo></div><div class="c" style="left:564px;top:647px;width:83px;height:23px;background:#fde2a0"><bdo dir="ltr">۷۴۳,<i></i><i></i>۶</bdo></div><div class="c" style="left:500px;top:647px;width:63px;height:23px;background:#fde2a0"><bdo dir="ltr">۲۱۵,۱۱۳</bdo></div><div class="c" style="left:411px;top:647px;width:88px;height:23px;background:#fde2a0"><bdo dir="ltr">۱۵۹,۸۳<i></i></bdo></div><div class="c" style="left:334px;top:647px;width:76px;height:23px;background:#d5e4f4"><bdo dir="ltr">۲,۹۱۳,۶۵۴</bdo></div><div class="c" style="left:257px;top:647px;width:76px;height:23px;background:#d5e4f4"><bdo dir="ltr">۴,۲۳۳,۶۲۶</bdo></div><div class="c" style="left:194px;top:647px;width:62px;height:23px;background:#fde2a0"><bdo dir="ltr">۸۲,<i></i><i></i>۵</bdo></div><div class="c" style="left:105px;top:647px;width:88px;height:23px;background:#d5e4f4"><bdo dir="ltr">۳۴۷,۱۷۹</bdo></div><div class="l" style="left:36px;top:647px;width:68px;height:23px;background:#d5e4f4">تولید</div><div class="l" style="left:1802px;top:671px;width:82px;height:23px;background:#efefef">مایعات</div><div class="c" style="left:1775px;top:671px;width:26px;height:23px;background:#efefef">عدد</div><div class="c" style="left:1699px;top:671px;width:75px;height:23px;background:#efefef"><bdo dir="ltr"><i></i></bdo></div><div class="c" style="left:1619px;top:671px;width:79px;height:23px;background:#efefef"><bdo dir="ltr"><i></i></bdo></div><div class="c" style="left:1555px;top:671px;width:63px;height:23px;background:#fde2a0"><bdo dir="ltr"><i></i></bdo></div><div class="c" style="left:1465px;top:671px;width:89px;height:23px;background:#efefef"><bdo dir="ltr"><i></i></bdo></div><div class="c" style="left:1425px;top:671px;width:39px;height:23px;background:#efefef"></div><div class="c" style="left:1379px;top:671px;width:45px;height:23px;background:#efefef"></div><div class="c" style="left:1307px;top:671px;width:71px;height:23px;background:#efefef"><bdo dir="ltr"><i></i></bdo></div><div class="c" style="left:1231px;top:671px;width:75px;height:23px;background:#fde2a0"><bdo dir="ltr"><i></i></bdo></div><div class="c" style="left:1158px;top:671px;width:72px;height:23px;background:#fde2a0"><bdo dir="ltr"><i></i></bdo></div><div class="c" style="left:1095px;top:671px;width:62px;height:23px;background:#fde2a0"><bdo dir="ltr"><i></i></bdo></div><div class="c" style="left:1005px;top:671px;width:89px;height:23px;background:#fde2a0"><bdo dir="ltr"><i></i></bdo></div><div class="c" style="left:939px;top:671px;width:65px;height:23px;background:#efefef"><bdo dir="ltr"><i></i></bdo></div><div class="c" style="left:871px;top:671px;width:67px;height:23px;background:#efefef"><bdo dir="ltr"><i></i></bdo></div><div class="c" style="left:809px;top:671px;width:61px;height:23px;background:#fde2a0"><bdo dir="ltr"><i></i></bdo></div><div class="c" style="left:724px;top:671px;width:84px;height:23px;background:#efefef"><bdo dir="ltr"><i></i></bdo></div><div class="c" style="left:648px;top:671px;width:75px;height:23px;background:#fde2a0"><bdo dir="ltr"><i></i></bdo></div><div class="c" style="left:564px;top:671px;width:83px;height:23px;background:#fde2a0"><bdo dir="ltr"><i></i></bdo></div><div class="c" style="left:500px;top:671px;width:63px;height:23px;background:#fde2a0"><bdo dir="ltr"><i></i></bdo></div><div class="c" style="left:411px;top:671px;width:88px;height:23px;background:#fde2a0"><bdo dir="ltr"><i></i></bdo></div><div class="c" style="left:334px;top:671px;width:76px;height:23px;background:#efefef"><bdo dir="ltr">۱۹,۸۱۸</bdo></div><div class="c" style="left:257px;top:671px;width:76px;height:23px;background:#efefef"><bdo dir="ltr">۹۳,۸۱۸</bdo></div><div class="c" style="left:194px;top:671px;width:62px;height:23px;background:#fde2a0"><bdo dir="ltr">۱۶۷,۱۶۴</bdo></div><div class="c" style="left:105px;top:671px;width:88px;height:23px;background:#efefef"><bdo dir="ltr">۱۵,۶۸۳</bdo></div><div class="l" style="left:36px;top:671px;width:68px;height:23px;background:#efefef">تولید</div><div class="l" style="left:1802px;top:695px;width:82px;height:23px;background:#d5e4f4">جامدات</div><div class="c" style="left:1775px;top:695px;width:26px;height:23px;background:#d5e4f4">عدد</div><div class="c" style="left:1699px;top:695px;width:75px;height:23px;background:#d5e4f4"><bdo dir="ltr"><i></i></bdo></div><div class="c" style="left:1619px;top:695px;width:79px;height:23px;background:#d5e4f4"><bdo dir="ltr">۱,۴۷۱,۴۲<i></i></bdo></div><div class="c" style="left:1555px;top:695px;width:63px;height:23px;background:#fde2a0"><bdo dir="ltr">۸,۸۷۸</bdo></div><div class="c" style="left:1465px;top:695px;width:89px;height:23px;background:#d5e4f4"><bdo dir="ltr">۱۳,<i></i>۶۴</bdo></div><div class="c" style="left:1425px;top:695px;width:39px;height:23px;background:#d5e4f4"></div><div class="c" style="left:1379px;top:695px;width:45px;height:23px;background:#d5e4f4"></div><div class="c" style="left:1307px;top:695px;width:71px;height:23px;background:#d5e4f4"><bdo dir="ltr"><i></i></bdo></div><div class="c" style="left:1231px;top:695px;width:75px;height:23px;background:#fde2a0"><bdo dir="ltr"><i></i></bdo></div><div class="c" style="left:1158px;top:695px;width:72px;height:23px;background:#fde2a0"><bdo dir="ltr">۱,۴۷۱,۴۲<i></i></bdo></div><div class="c" style="left:1095px;top:695px;width:62px;height:23px;background:#fde2a0"><bdo dir="ltr">۸,۸۷۸</bdo></div><div class="c" style="left:1005px;top:695px;width:89px;height:23px;background:#fde2a0"><bdo dir="ltr">۱۳,<i></i>۶۴</bdo></div><div class="c" style="left:939px;top:695px;width:65px;height:23px;background:#d5e4f4"><bdo dir="ltr"><i></i></bdo></div><div class="c" style="left:871px;top:695px;width:67px;height:23px;background:#d5e4f4"><bdo dir="ltr"><i></i></bdo></div><div class="c" style="left:809px;top:695px;width:61px;height:23px;background:#fde2a0"><bdo dir="ltr"><i></i></bdo></div><div class="c" style="left:724px;top:695px;width:84px;height:23px;background:#d5e4f4"><bdo dir="ltr"><i></i></bdo></div><div class="c" style="left:648px;top:695px;width:75px;height:23px;background:#fde2a0"><bdo dir="ltr"><i></i></bdo></div><div class="c" style="left:564px;top:695px;width:83px;height:23px;background:#fde2a0"><bdo dir="ltr">۱,۴۷۱,۴۲<i></i></bdo></div><div class="c" style="left:500px;top:695px;width:63px;height:23px;background:#fde2a0"><bdo dir="ltr">۸,۸۷۸</bdo></div><div class="c" style="left:411px;top:695px;width:88px;height:23px;background:#fde2a0"><bdo dir="ltr">۱۳,<i></i>۶۴</bdo></div><div class="c" style="left:334px;top:695px;width:76px;height:23px;background:#d5e4f4"><bdo dir="ltr">۱۳۹,۳۲۸</bdo></div><div class="c" style="left:257px;top:695px;width:76px;height:23px;background:#d5e4f4"><bdo dir="ltr">۱,۸۱۲,۳۶۸</bdo></div><div class="c" style="left:194px;top:695px;width:62px;height:23px;background:#fde2a0"><bdo dir="ltr">۱۵,۳۹۱</bdo></div><div class="c" style="left:105px;top:695px;width:88px;height:23px;background:#d5e4f4"><bdo dir="ltr">۲۷,۸۹۵</bdo></div><div class="l" style="left:36px;top:695px;width:68px;height:23px;background:#d5e4f4">تولید</div><div class="l" style="left:1802px;top:719px;width:82px;height:40px;background:#fde2a0">جمع فروش<br>صادراتی</div><div class="c ct" style="left:1775px;top:719px;width:26px;height:40px;background:#fde2a0"></div><div class="c ct" style="left:1699px;top:719px;width:75px;height:40px;background:#fde2a0"><bdo dir="ltr"><i></i></bdo></div><div class="c ct" style="left:1619px;top:719px;width:79px;height:40px;background:#fde2a0"><bdo dir="ltr">۲,۲۲۸,۵۵۷</bdo></div><div class="c ct" style="left:1555px;top:719px;width:63px;height:40px;background:#fde2a0"></div><div class="c ct" style="left:1465px;top:719px;width:89px;height:40px;background:#fde2a0"><bdo dir="ltr">۱۷۴,<i></i><i></i>۸</bdo></div><div class="c ct" style="left:1425px;top:719px;width:39px;height:40px;background:#fde2a0"><bdo dir="ltr"><i></i></bdo></div><div class="c ct" style="left:1379px;top:719px;width:45px;height:40px;background:#fde2a0"><bdo dir="ltr"><i></i></bdo></div><div class="c ct" style="left:1307px;top:719px;width:71px;height:40px;background:#fde2a0"><bdo dir="ltr"><i></i></bdo></div><div class="c ct" style="left:1231px;top:719px;width:75px;height:40px;background:#fde2a0"><bdo dir="ltr"><i></i></bdo></div><div class="c ct" style="left:1158px;top:719px;width:72px;height:40px;background:#fde2a0"><bdo dir="ltr"><i></i></bdo></div><div class="c ct" style="left:1095px;top:719px;width:62px;height:40px;background:#fde2a0"></div><div class="c ct" style="left:1005px;top:719px;width:89px;height:40px;background:#fde2a0"><bdo dir="ltr">۱۷۴,<i></i><i></i>۸</bdo></div><div class="c ct" style="left:939px;top:719px;width:65px;height:40px;background:#fde2a0"><bdo dir="ltr"><i></i></bdo></div><div class="c ct" style="left:871px;top:719px;width:67px;height:40px;background:#fde2a0"><bdo dir="ltr"><i></i></bdo></div><div class="c ct" style="left:809px;top:719px;width:61px;height:40px;background:#fde2a0"></div><div class="c ct" style="left:724px;top:719px;width:84px;height:40px;background:#fde2a0"><bdo dir="ltr"><i></i></bdo></div><div class="c ct" style="left:648px;top:719px;width:75px;height:40px;background:#fde2a0"><bdo dir="ltr"><i></i></bdo></div><div class="c ct" style="left:564px;top:719px;width:83px;height:40px;background:#fde2a0"><bdo dir="ltr">۲,۲۲۸,۵۵۷</bdo></div><div class="c ct" style="left:500px;top:719px;width:63px;height:40px;background:#fde2a0"></div><div class="c ct" style="left:411px;top:719px;width:88px;height:40px;background:#fde2a0"><bdo dir="ltr">۱۷۴,<i></i><i></i>۸</bdo></div><div class="c ct" style="left:334px;top:719px;width:76px;height:40px;background:#fde2a0"><bdo dir="ltr">۵,۴<i></i>۱,۵<i></i><i></i></bdo></div><div class="c ct" style="left:257px;top:719px;width:76px;height:40px;background:#fde2a0"><bdo dir="ltr">۹,۳۹۵,۵۹۲</bdo></div><div class="c ct" style="left:194px;top:719px;width:62px;height:40px;background:#fde2a0"></div><div class="c ct" style="left:105px;top:719px;width:88px;height:40px;background:#fde2a0"><bdo dir="ltr">۵۸۱,<i></i>۱۲</bdo></div><div class="l ct" style="left:36px;top:719px;width:68px;height:40px;background:#fde2a0"></div><div class="sl" style="left:1802px;top:760px;width:82px;height:40px;background:#d4d4d4">درآمد ارائه<br>خدمات:</div><div class="c" style="left:1775px;top:760px;width:26px;height:40px;background:#d4d4d4"></div><div class="c" style="left:1699px;top:760px;width:75px;height:40px;background:#d4d4d4"></div><div class="c" style="left:1619px;top:760px;width:79px;height:40px;background:#d4d4d4"></div><div class="c" style="left:1555px;top:760px;width:63px;height:40px;background:#d4d4d4"></div><div class="c" style="left:1465px;top:760px;width:89px;height:40px;background:#d4d4d4"></div><div class="c" style="left:1425px;top:760px;width:39px;height:40px;background:#d4d4d4"></div><div class="c" style="left:1379px;top:760px;width:45px;height:40px;background:#d4d4d4"></div><div class="c" style="left:1307px;top:760px;width:71px;height:40px;background:#d4d4d4"></div><div class="c" style="left:1231px;top:760px;width:75px;height:40px;background:#d4d4d4"></div><div class="c" style="left:1158px;top:760px;width:72px;height:40px;background:#d4d4d4"></div><div class="c" style="left:1095px;top:760px;width:62px;height:40px;background:#d4d4d4"></div><div class="c" style="left:1005px;top:760px;width:89px;height:40px;background:#d4d4d4"></div><div class="c" style="left:939px;top:760px;width:65px;height:40px;background:#d4d4d4"></div><div class="c" style="left:871px;top:760px;width:67px;height:40px;background:#d4d4d4"></div><div class="c" style="left:809px;top:760px;width:61px;height:40px;background:#d4d4d4"></div><div class="c" style="left:724px;top:760px;width:84px;height:40px;background:#d4d4d4"></div><div class="c" style="left:648px;top:760px;width:75px;height:40px;background:#d4d4d4"></div><div class="c" style="left:564px;top:760px;width:83px;height:40px;background:#d4d4d4"></div><div class="c" style="left:500px;top:760px;width:63px;height:40px;background:#d4d4d4"></div><div class="c" style="left:411px;top:760px;width:88px;height:40px;background:#d4d4d4"></div><div class="c" style="left:334px;top:760px;width:76px;height:40px;background:#d4d4d4"></div><div class="c" style="left:257px;top:760px;width:76px;height:40px;background:#d4d4d4"></div><div class="c" style="left:194px;top:760px;width:62px;height:40px;background:#d4d4d4"></div><div class="c" style="left:105px;top:760px;width:88px;height:40px;background:#d4d4d4"></div><div class="c" style="left:36px;top:760px;width:68px;height:40px;background:#d4d4d4"></div><div class="l" style="left:1802px;top:801px;width:82px;height:24px;background:#d5e4f4">ارائه خدمات</div><div class="c" style="left:1775px;top:801px;width:26px;height:24px;background:#d5e4f4">عدد</div><div class="c" style="left:1699px;top:801px;width:75px;height:24px;background:#d5e4f4"><bdo dir="ltr">۳,۱۳۳,۳۱۷</bdo></div><div class="c" style="left:1619px;top:801px;width:79px;height:24px;background:#d5e4f4"><bdo dir="ltr">۱,۵۶۵,۱۳۸</bdo></div><div class="c" style="left:1555px;top:801px;width:63px;height:24px;background:#fde2a0"><bdo dir="ltr">۱<i></i>۷,۸<i></i>۱</bdo></div><div class="c" style="left:1465px;top:801px;width:89px;height:24px;background:#d5e4f4"><bdo dir="ltr">۱۶۸,۷۲۳</bdo></div><div class="c" style="left:1425px;top:801px;width:39px;height:24px;background:#d5e4f4"><bdo dir="ltr"><i></i></bdo></div><div class="c" style="left:1379px;top:801px;width:45px;height:24px;background:#d5e4f4"><bdo dir="ltr"><i></i></bdo></div><div class="c" style="left:1307px;top:801px;width:71px;height:24px;background:#d5e4f4"><bdo dir="ltr"><i></i></bdo></div><div class="c" style="left:1231px;top:801px;width:75px;height:24px;background:#fde2a0"><bdo dir="ltr">۳,۱۳۳,۳۱۷</bdo></div><div class="c" style="left:1158px;top:801px;width:72px;height:24px;background:#fde2a0"><bdo dir="ltr">۱,۵۶۵,۱۳۸</bdo></div><div class="c" style="left:1095px;top:801px;width:62px;height:24px;background:#fde2a0"><bdo dir="ltr">۱<i></i>۷,۸<i></i>۱</bdo></div><div class="c" style="left:1005px;top:801px;width:89px;height:24px;background:#fde2a0"><bdo dir="ltr">۱۶۸,۷۲۳</bdo></div><div class="c" style="left:939px;top:801px;width:65px;height:24px;background:#d5e4f4"><bdo dir="ltr">۲<i></i><i></i>,۶<i></i>۸</bdo></div><div class="c" style="left:871px;top:801px;width:67px;height:24px;background:#d5e4f4"><bdo dir="ltr">۱,۳۸<i></i>,۷۴۵</bdo></div><div class="c" style="left:809px;top:801px;width:61px;height:24px;background:#fde2a0"><bdo dir="ltr">۶۷,۴۵۶</bdo></div><div class="c" style="left:724px;top:801px;width:84px;height:24px;background:#d5e4f4"><bdo dir="ltr">۹۳,۱۳۹</bdo></div><div class="c" style="left:648px;top:801px;width:75px;height:24px;background:#fde2a0"><bdo dir="ltr">۳,۳۳۳,۹۲۵</bdo></div><div class="c" style="left:564px;top:801px;width:83px;height:24px;background:#fde2a0"><bdo dir="ltr">۲,۹۴۵,۸۸۳</bdo></div><div class="c" style="left:500px;top:801px;width:63px;height:24px;background:#fde2a0"><bdo dir="ltr">۸۸,۸۹۱</bdo></div><div class="c" style="left:411px;top:801px;width:88px;height:24px;background:#fde2a0"><bdo dir="ltr">۲۶۱,۸۶۲</bdo></div><div class="c" style="left:334px;top:801px;width:76px;height:24px;background:#d5e4f4"><bdo dir="ltr">۱,۳۵<i></i>,۷۸۳</bdo></div><div class="c" style="left:257px;top:801px;width:76px;height:24px;background:#d5e4f4"><bdo dir="ltr">۱,۲۳۳,۱<i></i>۳</bdo></div><div class="c" style="left:194px;top:801px;width:62px;height:24px;background:#fde2a0"><bdo dir="ltr">۲۲۹,۹۲۳</bdo></div><div class="c" style="left:105px;top:801px;width:88px;height:24px;background:#d5e4f4"><bdo dir="ltr">۲۸۳,۵۱۹</bdo></div><div class="l" style="left:36px;top:801px;width:68px;height:24px;background:#d5e4f4">تولید</div><div class="l" style="left:1802px;top:826px;width:82px;height:40px;background:#fde2a0">جمع درآمد ارائه<br>خدمات</div><div class="c ct" style="left:1775px;top:826px;width:26px;height:40px;background:#fde2a0"></div><div class="c ct" style="left:1699px;top:826px;width:75px;height:40px;background:#fde2a0"><bdo dir="ltr">۳,۱۳۳,۳۱۷</bdo></div><div class="c ct" style="left:1619px;top:826px;width:79px;height:40px;background:#fde2a0"><bdo dir="ltr">۱,۵۶۵,۱۳۸</bdo></div><div class="c ct" style="left:1555px;top:826px;width:63px;height:40px;background:#fde2a0"></div><div class="c ct" style="left:1465px;top:826px;width:89px;height:40px;background:#fde2a0"><bdo dir="ltr">۱۶۸,۷۲۳</bdo></div><div class="c ct" style="left:1425px;top:826px;width:39px;height:40px;background:#fde2a0"><bdo dir="ltr"><i></i></bdo></div><div class="c ct" style="left:1379px;top:826px;width:45px;height:40px;background:#fde2a0"><bdo dir="ltr"><i></i></bdo></div><div class="c ct" style="left:1307px;top:826px;width:71px;height:40px;background:#fde2a0"><bdo dir="ltr"><i></i></bdo></div><div class="c ct" style="left:1231px;top:826px;width:75px;height:40px;background:#fde2a0"><bdo dir="ltr"><i></i></bdo></div><div class="c ct" style="left:1158px;top:826px;width:72px;height:40px;background:#fde2a0"><bdo dir="ltr"><i></i></bdo></div><div class="c ct" style="left:1095px;top:826px;width:62px;height:40px;background:#fde2a0"></div><div class="c ct" style="left:1005px;top:826px;width:89px;height:40px;background:#fde2a0"><bdo dir="ltr">۱۶۸,۷۲۳</bdo></div><div class="c ct" style="left:939px;top:826px;width:65px;height:40px;background:#fde2a0"><bdo dir="ltr">۲<i></i><i></i>,۶<i></i>۸</bdo></div><div class="c ct" style="left:871px;top:826px;width:67px;height:40px;background:#fde2a0"><bdo dir="ltr">۱,۳۸<i></i>,۷۴۵</bdo></div><div class="c ct" style="left:809px;top:826px;width:61px;height:40px;background:#fde2a0"></div><div class="c ct" style="left:724px;top:826px;width:84px;height:40px;background:#fde2a0"><bdo dir="ltr">۹۳,۱۳۹</bdo></div><div class="c ct" style="left:648px;top:826px;width:75px;height:40px;background:#fde2a0"><bdo dir="ltr">۳,۳۳۳,۹۲۵</bdo></div><div class="c ct" style="left:564px;top:826px;width:83px;height:40px;background:#fde2a0"><bdo dir="ltr">۲,۹۴۵,۸۸۳</bdo></div><div class="c ct" style="left:500px;top:826px;width:63px;height:40px;background:#fde2a0"></div><div class="c ct" style="left:411px;top:826px;width:88px;height:40px;background:#fde2a0"><bdo dir="ltr">۲۶۱,۸۶۲</bdo></div><div class="c ct" style="left:334px;top:826px;width:76px;height:40px;background:#fde2a0"><bdo dir="ltr">۱,۳۵<i></i>,۷۸۳</bdo></div><div class="c ct" style="left:257px;top:826px;width:76px;height:40px;background:#fde2a0"><bdo dir="ltr">۱,۲۳۳,۱<i></i>۳</bdo></div><div class="c ct" style="left:194px;top:826px;width:62px;height:40px;background:#fde2a0"></div><div class="c ct" style="left:105px;top:826px;width:88px;height:40px;background:#fde2a0"><bdo dir="ltr">۲۸۳,۵۱۹</bdo></div><div class="l ct" style="left:36px;top:826px;width:68px;height:40px;background:#fde2a0"></div><div class="sl" style="left:1802px;top:867px;width:82px;height:40px;background:#d4d4d4">برگشت از<br>فروش:</div><div class="c" style="left:1775px;top:867px;width:26px;height:40px;background:#d4d4d4"></div><div class="c" style="left:1699px;top:867px;width:75px;height:40px;background:#d4d4d4"></div><div class="c" style="left:1619px;top:867px;width:79px;height:40px;background:#d4d4d4"></div><div class="c" style="left:1555px;top:867px;width:63px;height:40px;background:#d4d4d4"></div><div class="c" style="left:1465px;top:867px;width:89px;height:40px;background:#d4d4d4"></div><div class="c" style="left:1425px;top:867px;width:39px;height:40px;background:#d4d4d4"></div><div class="c" style="left:1379px;top:867px;width:45px;height:40px;background:#d4d4d4"></div><div class="c" style="left:1307px;top:867px;width:71px;height:40px;background:#d4d4d4"></div><div class="c" style="left:1231px;top:867px;width:75px;height:40px;background:#d4d4d4"></div><div class="c" style="left:1158px;top:867px;width:72px;height:40px;background:#d4d4d4"></div><div class="c" style="left:1095px;top:867px;width:62px;height:40px;background:#d4d4d4"></div><div class="c" style="left:1005px;top:867px;width:89px;height:40px;background:#d4d4d4"></div><div class="c" style="left:939px;top:867px;width:65px;height:40px;background:#d4d4d4"></div><div class="c" style="left:871px;top:867px;width:67px;height:40px;background:#d4d4d4"></div><div class="c" style="left:809px;top:867px;width:61px;height:40px;background:#d4d4d4"></div><div class="c" style="left:724px;top:867px;width:84px;height:40px;background:#d4d4d4"></div><div class="c" style="left:648px;top:867px;width:75px;height:40px;background:#d4d4d4"></div><div class="c" style="left:564px;top:867px;width:83px;height:40px;background:#d4d4d4"></div><div class="c" style="left:500px;top:867px;width:63px;height:40px;background:#d4d4d4"></div><div class="c" style="left:411px;top:867px;width:88px;height:40px;background:#d4d4d4"></div><div class="c" style="left:334px;top:867px;width:76px;height:40px;background:#d4d4d4"></div><div class="c" style="left:257px;top:867px;width:76px;height:40px;background:#d4d4d4"></div><div class="c" style="left:194px;top:867px;width:62px;height:40px;background:#d4d4d4"></div><div class="c" style="left:105px;top:867px;width:88px;height:40px;background:#d4d4d4"></div><div class="c" style="left:36px;top:867px;width:68px;height:40px;background:#d4d4d4"></div><div class="l" style="left:1802px;top:908px;width:82px;height:40px;background:#fde2a0">جمع برگشت از<br>فروش</div><div class="c ct" style="left:1775px;top:908px;width:26px;height:40px;background:#fde2a0"></div><div class="c ct" style="left:1699px;top:908px;width:75px;height:40px;background:#fde2a0"></div><div class="c ct" style="left:1619px;top:908px;width:79px;height:40px;background:#fde2a0"><bdo dir="ltr"><i></i></bdo></div><div class="c ct" style="left:1555px;top:908px;width:63px;height:40px;background:#fde2a0"></div><div class="c ct" style="left:1465px;top:908px;width:89px;height:40px;background:#fde2a0"><bdo dir="ltr"><i></i></bdo></div><div class="c ct" style="left:1425px;top:908px;width:39px;height:40px;background:#fde2a0"></div><div class="c ct" style="left:1379px;top:908px;width:45px;height:40px;background:#fde2a0"><bdo dir="ltr"><i></i></bdo></div><div class="c ct" style="left:1307px;top:908px;width:71px;height:40px;background:#fde2a0"><bdo dir="ltr"><i></i></bdo></div><div class="c ct" style="left:1231px;top:908px;width:75px;height:40px;background:#fde2a0"></div><div class="c ct" style="left:1158px;top:908px;width:72px;height:40px;background:#fde2a0"><bdo dir="ltr"><i></i></bdo></div><div class="c ct" style="left:1095px;top:908px;width:62px;height:40px;background:#fde2a0"></div><div class="c ct" style="left:1005px;top:908px;width:89px;height:40px;background:#fde2a0"><bdo dir="ltr"><i></i></bdo></div><div class="c ct" style="left:939px;top:908px;width:65px;height:40px;background:#fde2a0"></div><div class="c ct" style="left:871px;top:908px;width:67px;height:40px;background:#fde2a0"><bdo dir="ltr"><i></i></bdo></div><div class="c ct" style="left:809px;top:908px;width:61px;height:40px;background:#fde2a0"></div><div class="c ct" style="left:724px;top:908px;width:84px;height:40px;background:#fde2a0"><bdo dir="ltr"><i></i></bdo></div><div class="c ct" style="left:648px;top:908px;width:75px;height:40px;background:#fde2a0"></div><div class="c ct" style="left:564px;top:908px;width:83px;height:40px;background:#fde2a0"><bdo dir="ltr"><i></i></bdo></div><div class="c ct" style="left:500px;top:908px;width:63px;height:40px;background:#fde2a0"></div><div class="c ct" style="left:411px;top:908px;width:88px;height:40px;background:#fde2a0"><bdo dir="ltr"><i></i></bdo></div><div class="c ct" style="left:334px;top:908px;width:76px;height:40px;background:#fde2a0"></div><div class="c ct" style="left:257px;top:908px;width:76px;height:40px;background:#fde2a0"><bdo dir="ltr"><i></i></bdo></div><div class="c ct" style="left:194px;top:908px;width:62px;height:40px;background:#fde2a0"></div><div class="c ct" style="left:105px;top:908px;width:88px;height:40px;background:#fde2a0"><bdo dir="ltr"><i></i></bdo></div><div class="l ct" style="left:36px;top:908px;width:68px;height:40px;background:#fde2a0"></div><div class="l" style="left:1802px;top:949px;width:82px;height:24px;background:#d5e4f4">تخفیفات</div><div class="c" style="left:1775px;top:949px;width:26px;height:24px;background:#d5e4f4"></div><div class="c" style="left:1699px;top:949px;width:75px;height:24px;background:#d4d4d4"></div><div class="c" style="left:1619px;top:949px;width:79px;height:24px;background:#d4d4d4"></div><div class="c" style="left:1555px;top:949px;width:63px;height:24px;background:#d4d4d4"></div><div class="c red" style="left:1465px;top:949px;width:89px;height:24px;background:#d5e4f4"><bdo dir="ltr">(۹۹۵,<i></i>۵۲)</bdo></div><div class="c" style="left:1425px;top:949px;width:39px;height:24px;background:#d4d4d4"></div><div class="c" style="left:1379px;top:949px;width:45px;height:24px;background:#d4d4d4"></div><div class="c" style="left:1307px;top:949px;width:71px;height:24px;background:#d5e4f4"><bdo dir="ltr"><i></i></bdo></div><div class="c" style="left:1231px;top:949px;width:75px;height:24px;background:#d4d4d4"></div><div class="c" style="left:1158px;top:949px;width:72px;height:24px;background:#d4d4d4"></div><div class="c" style="left:1095px;top:949px;width:62px;height:24px;background:#d4d4d4"></div><div class="c red" style="left:1005px;top:949px;width:89px;height:24px;background:#d5e4f4"><bdo dir="ltr">(۹۹۵,<i></i>۵۲)</bdo></div><div class="c" style="left:939px;top:949px;width:65px;height:24px;background:#d4d4d4"></div><div class="c" style="left:871px;top:949px;width:67px;height:24px;background:#d4d4d4"></div><div class="c" style="left:809px;top:949px;width:61px;height:24px;background:#d4d4d4"></div><div class="c red" style="left:724px;top:949px;width:84px;height:24px;background:#d5e4f4"><bdo dir="ltr">(۳۳۵,۷۱۳)</bdo></div><div class="c" style="left:648px;top:949px;width:75px;height:24px;background:#d4d4d4"></div><div class="c" style="left:564px;top:949px;width:83px;height:24px;background:#d4d4d4"></div><div class="c" style="left:500px;top:949px;width:63px;height:24px;background:#d4d4d4"></div><div class="c red" style="left:411px;top:949px;width:88px;height:24px;background:#d5e4f4"><bdo dir="ltr">(۱,۳۳<i></i>,۷۶۵)</bdo></div><div class="c" style="left:334px;top:949px;width:76px;height:24px;background:#d4d4d4"></div><div class="c" style="left:257px;top:949px;width:76px;height:24px;background:#d4d4d4"></div><div class="c" style="left:194px;top:949px;width:62px;height:24px;background:#d4d4d4"></div><div class="c red" style="left:105px;top:949px;width:88px;height:24px;background:#d5e4f4"><bdo dir="ltr">(۱,۲۵۲,۷۷۴)</bdo></div><div class="l" style="left:36px;top:949px;width:68px;height:24px;background:#d5e4f4"></div><div class="l" style="left:1802px;top:974px;width:82px;height:23px;background:#fde2a0">جمع</div><div class="c ct" style="left:1775px;top:974px;width:26px;height:23px;background:#fde2a0"></div><div class="c ct" style="left:1699px;top:974px;width:75px;height:23px;background:#fde2a0"></div><div class="c ct" style="left:1619px;top:974px;width:79px;height:23px;background:#fde2a0"></div><div class="c ct" style="left:1555px;top:974px;width:63px;height:23px;background:#fde2a0"></div><div class="c ct" style="left:1465px;top:974px;width:89px;height:23px;background:#fde2a0"><bdo dir="ltr">۱۹,۶۹۲,۲<i></i>۱</bdo></div><div class="c ct" style="left:1425px;top:974px;width:39px;height:23px;background:#fde2a0"></div><div class="c ct" style="left:1379px;top:974px;width:45px;height:23px;background:#fde2a0"></div><div class="c ct" style="left:1307px;top:974px;width:71px;height:23px;background:#fde2a0"><bdo dir="ltr"><i></i></bdo></div><div class="c ct" style="left:1231px;top:974px;width:75px;height:23px;background:#fde2a0"></div><div class="c ct" style="left:1158px;top:974px;width:72px;height:23px;background:#fde2a0"></div><div class="c ct" style="left:1095px;top:974px;width:62px;height:23px;background:#fde2a0"></div><div class="c ct" style="left:1005px;top:974px;width:89px;height:23px;background:#fde2a0"><bdo dir="ltr">۱۹,۶۹۲,۲<i></i>۱</bdo></div><div class="c ct" style="left:939px;top:974px;width:65px;height:23px;background:#fde2a0"></div><div class="c ct" style="left:871px;top:974px;width:67px;height:23px;background:#fde2a0"></div><div class="c ct" style="left:809px;top:974px;width:61px;height:23px;background:#fde2a0"></div><div class="c ct" style="left:724px;top:974px;width:84px;height:23px;background:#fde2a0"><bdo dir="ltr">۵,<i></i>۵۶,۲۲<i></i></bdo></div><div class="c ct" style="left:648px;top:974px;width:75px;height:23px;background:#fde2a0"></div><div class="c ct" style="left:564px;top:974px;width:83px;height:23px;background:#fde2a0"></div><div class="c ct" style="left:500px;top:974px;width:63px;height:23px;background:#fde2a0"></div><div class="c ct" style="left:411px;top:974px;width:88px;height:23px;background:#fde2a0"><bdo dir="ltr">۲۴,۷۴۸,۴۲۱</bdo></div><div class="c ct" style="left:334px;top:974px;width:76px;height:23px;background:#fde2a0"></div><div class="c ct" style="left:257px;top:974px;width:76px;height:23px;background:#fde2a0"></div><div class="c ct" style="left:194px;top:974px;width:62px;height:23px;background:#fde2a0"></div><div class="c ct" style="left:105px;top:974px;width:88px;height:23px;background:#fde2a0"><bdo dir="ltr">۲<i></i>,<i></i>۲۹,۳۲۹</bdo></div><div class="l ct" style="left:36px;top:974px;width:68px;height:23px;background:#fde2a0"></div></div>
<div class="a" style="left:35px;top:1008px;width:1850px;height:27px;background:#0399cb"></div>
<div id="msec2" class="a " style="right:40px;top:1012px;font-size:12px;line-height:18px;font-weight:bold;color:#fff;-webkit-text-stroke:0.25px #fff">خرید مواد اولیه</div>
<div id="t2grid"></div>
<div id="t2"><div class="h hr" style="left:1756px;top:1041px;width:128px;height:79px;background:#0399cb">شرح</div><div class="h hr" style="left:1725px;top:1041px;width:30px;height:79px;background:#0399cb">واحد</div><div class="h" style="left:1463px;top:1041px;width:261px;height:23px;background:#0399cb"><span>از ابتدای سال مالی تا تاریخ <bdo dir="ltr">۱۴<i></i>۴/<i></i>۴/۳۱</bdo></span></div><div class="h ht" style="left:1689px;top:1065px;width:35px;height:55px;background:#0399cb">مقدار</div><div class="h ht" style="left:1571px;top:1065px;width:117px;height:55px;background:#0399cb">نرخ (ریال)</div><div class="h ht" style="left:1463px;top:1065px;width:107px;height:55px;background:#0399cb">مبلغ (میلیون ریال)</div><div class="h" style="left:1254px;top:1041px;width:208px;height:23px;background:#0399cb">اصلاحات</div><div class="h ht" style="left:1435px;top:1065px;width:27px;height:55px;background:#0399cb">مقدار</div><div class="h ht" style="left:1373px;top:1065px;width:61px;height:55px;background:#0399cb">نرخ (ریال)</div><div class="h ht" style="left:1254px;top:1065px;width:118px;height:55px;background:#0399cb">مبلغ ( میلیون ریال)</div><div class="h" style="left:963px;top:1041px;width:290px;height:23px;background:#0399cb"><span>ازابتدای سال مالی تا تاریخ <bdo dir="ltr">۱۴<i></i>۴/<i></i>۴/۳۱</bdo> (اصلاح شده)</span></div><div class="h ht" style="left:1215px;top:1065px;width:38px;height:55px;background:#0399cb">مقدار</div><div class="h ht" style="left:1083px;top:1065px;width:131px;height:55px;background:#0399cb">نرخ (ریال)</div><div class="h ht" style="left:963px;top:1065px;width:119px;height:55px;background:#0399cb">مبلغ (میلیون ریال)</div><div class="h" style="left:701px;top:1041px;width:261px;height:23px;background:#0399cb"><span>خرید دوره یک ماهه منتهی به <bdo dir="ltr">۱۴<i></i>۴/<i></i>۵/۳۱</bdo></span></div><div class="h ht" style="left:928px;top:1065px;width:34px;height:55px;background:#0399cb">مقدار</div><div class="h ht" style="left:809px;top:1065px;width:118px;height:55px;background:#0399cb">نرخ (ریال)</div><div class="h ht" style="left:701px;top:1065px;width:107px;height:55px;background:#0399cb">مبلغ (میلیون ریال)</div><div class="h" style="left:297px;top:1041px;width:403px;height:23px;background:#0399cb"><span>مواد اولیه خریداری شده از ابتدای دوره تا پایان دوره منتهی به <bdo dir="ltr">۱۴<i></i>۴/<i></i>۵/۳۱</bdo></span></div><div class="h ht" style="left:646px;top:1065px;width:54px;height:55px;background:#0399cb">مقدار</div><div class="h ht" style="left:462px;top:1065px;width:183px;height:55px;background:#0399cb">نرخ (ریال)</div><div class="h ht" style="left:297px;top:1065px;width:164px;height:55px;background:#0399cb">مبلغ (میلیون ریال)</div><div class="h" style="left:36px;top:1041px;width:260px;height:23px;background:#0399cb"><span>از ابتدای سال مالی تا تاریخ <bdo dir="ltr">۱۴<i></i>۳/<i></i>۵/۳۱</bdo></span></div><div class="h ht" style="left:261px;top:1065px;width:35px;height:55px;background:#0399cb">مقدار</div><div class="h ht" style="left:144px;top:1065px;width:116px;height:55px;background:#0399cb">نرخ (ریال)</div><div class="h ht" style="left:36px;top:1065px;width:107px;height:55px;background:#0399cb">مبلغ (میلیون ریال)</div></div>
<div class="a" style="left:954px;top:538px;width:0;height:0"><div style="position:absolute;left:-500px;top:-60px;width:1000px;height:120px;line-height:120px;text-align:center;font-size:96px;font-weight:bold;color:rgba(128,128,128,0.1);direction:ltr;transform:rotate(-45deg);white-space:nowrap">@Codal360.ir</div></div>
</body></html>
